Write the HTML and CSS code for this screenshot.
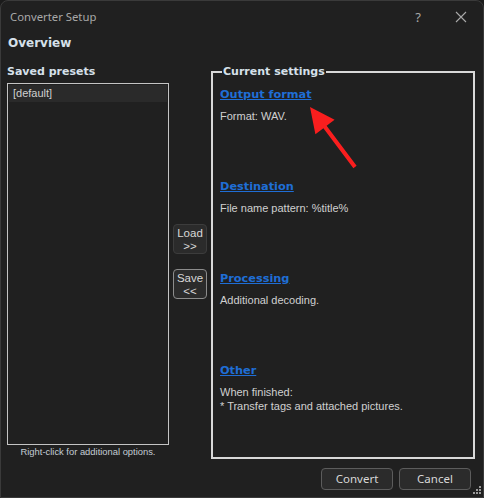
FILE: index.html
```html
<!DOCTYPE html>
<html>
<head>
<meta charset="utf-8">
<link rel="stylesheet" href="styles.css">
</head>
<body>
<div class="window">
  <div class="titlebar">
    <span class="title">Converter Setup</span>
    <span class="help">?</span>
    <svg class="close" width="12" height="12" viewBox="0 0 12 12"><path d="M1 1L11 11M11 1L1 11" stroke="#a8a8a8" stroke-width="1.1"/></svg>
  </div>
  <div class="overview">Overview</div>
  <div class="main">
    <div class="leftcol">
      <div class="label">Saved presets</div>
      <div class="listbox">
        <div class="item">[default]</div>
      </div>
      <div class="hint">Right-click for additional options.</div>
    </div>
    <div class="midcol">
      <div class="btn small">Load<br>&gt;&gt;</div>
      <div class="btn small focused">Save<br>&lt;&lt;</div>
    </div>
    <fieldset class="group">
      <legend>Current settings</legend>
      <div class="section">
        <a class="link">Output format</a>
        <div class="desc">Format: WAV.</div>
      </div>
      <div class="section">
        <a class="link">Destination</a>
        <div class="desc">File name pattern: %title%</div>
      </div>
      <div class="section">
        <a class="link">Processing</a>
        <div class="desc">Additional decoding.</div>
      </div>
      <div class="section">
        <a class="link">Other</a>
        <div class="desc">When finished:<br>* Transfer tags and attached pictures.</div>
      </div>
    </fieldset>
  </div>
  <div class="footer">
    <div class="btn wide">Convert</div>
    <div class="btn wide">Cancel</div>
  </div>
  <svg class="grip" width="10" height="10" viewBox="0 0 10 10">
    <rect x="7" y="1" width="2" height="2" fill="#9a9a9a"/>
    <rect x="4" y="4" width="2" height="2" fill="#9a9a9a"/>
    <rect x="7" y="4" width="2" height="2" fill="#9a9a9a"/>
    <rect x="1" y="7" width="2" height="2" fill="#9a9a9a"/>
    <rect x="4" y="7" width="2" height="2" fill="#9a9a9a"/>
    <rect x="7" y="7" width="2" height="2" fill="#9a9a9a"/>
  </svg>
  <svg class="arrow" width="484" height="498" viewBox="0 0 484 498">
    <polygon points="310,107 334.6,119.8 326.6,125.8 356.6,165.8 353.4,168.2 323.4,128.2 315.4,134.2" fill="#fa1e1e"/>
  </svg>
</div>
</body>
</html>
```
FILE: styles.css
```css
html, body {
  margin: 0;
  padding: 0;
  background: #1b1b1b;
}
.window {
  position: relative;
  width: 484px;
  height: 498px;
  box-sizing: border-box;
  background: #202020;
  border: 1px solid #3a3a3a;
  border-radius: 8px 8px 0 0;
  display: flex;
  flex-direction: column;
  font-family: "Liberation Sans", Arial, sans-serif;
  font-size: 11px;
  color: #cfcfcf;
  overflow: hidden;
}
.titlebar {
  height: 31px;
  display: flex;
  align-items: center;
  padding-left: 9px;
  flex: none;
}
.title {
  font-family: "Noto Sans", sans-serif;
  font-size: 11.3px;
  color: #a8a8a8;
  flex: 1;
}
.help {
  font-family: "Noto Sans", sans-serif;
  font-size: 13px;
  color: #a8a8a8;
  margin-right: 34px;
}
.close {
  margin-right: 16px;
}
.overview {
  font-family: "DejaVu Sans", sans-serif;
  font-weight: bold;
  font-size: 12px;
  color: #d6e0ea;
  padding-left: 7px;
  height: 22px;
  line-height: 23px;
  flex: none;
}
.main {
  display: flex;
  padding: 9px 0 0 6px;
  gap: 4px;
  flex: none;
}
.leftcol {
  width: 162px;
  display: flex;
  flex-direction: column;
}
.label {
  font-family: "DejaVu Sans", sans-serif;
  font-weight: bold;
  font-size: 11px;
  color: #d6e0ea;
  height: 16px;
  line-height: 17px;
}
.listbox {
  height: 362px;
  box-sizing: border-box;
  border: 1px solid #c4c4c4;
  margin-top: 4px;
  padding: 1px;
}
.item {
  height: 17px;
  line-height: 17px;
  padding-left: 4px;
  background: #2a2a2a;
  color: #d0d0d0;
  font-size: 11px;
}
.hint {
  font-size: 9.4px;
  color: #c4ccd4;
  text-align: center;
  margin-top: 1px;
  line-height: 12px;
}
.midcol {
  width: 34px;
  display: flex;
  flex-direction: column;
  gap: 15px;
  padding-top: 161px;
  box-sizing: border-box;
}
.btn {
  box-sizing: border-box;
  background: #2b2b2b;
  border: 1px solid #3c3c3c;
  border-radius: 4px;
  color: #d8d8d8;
  text-align: center;
}
.btn.small {
  height: 30px;
  font-size: 11.5px;
  line-height: 13px;
  padding-top: 2px;
}
.btn.focused {
  border-color: #8c8c8c;
}
.group {
  width: 264px;
  height: 394px;
  box-sizing: border-box;
  margin: 2px 0 0 0;
  border: 2px solid #d8d8d8;
  padding: 8px 6px 0 7px;
  min-width: 0;
}
.group legend {
  font-family: "DejaVu Sans", sans-serif;
  font-weight: bold;
  font-size: 11px;
  color: #d6e0ea;
  padding: 0 1px;
  margin-left: 2px;
  line-height: 14px;
}
.section {
  height: 92px;
}
.link {
  display: block;
  font-family: "DejaVu Sans", sans-serif;
  font-weight: bold;
  font-size: 11.3px;
  color: #1f6ed6;
  text-decoration: underline;
  line-height: 16px;
  margin-left: 0;
}
.desc {
  margin-top: 6px;
  line-height: 14px;
  color: #d0d0d0;
}
.footer {
  display: flex;
  justify-content: flex-end;
  gap: 6px;
  padding: 9px 12px 0 0;
}
.btn.wide {
  width: 72px;
  height: 22px;
  line-height: 20px;
  border-color: #5c5c5c;
  font-family: "Noto Sans", sans-serif;
  font-size: 11.5px;
}
.grip {
  position: absolute;
  right: 1px;
  bottom: 2px;
}
.arrow {
  position: absolute;
  left: -1px;
  top: -1px;
  pointer-events: none;
}
```
